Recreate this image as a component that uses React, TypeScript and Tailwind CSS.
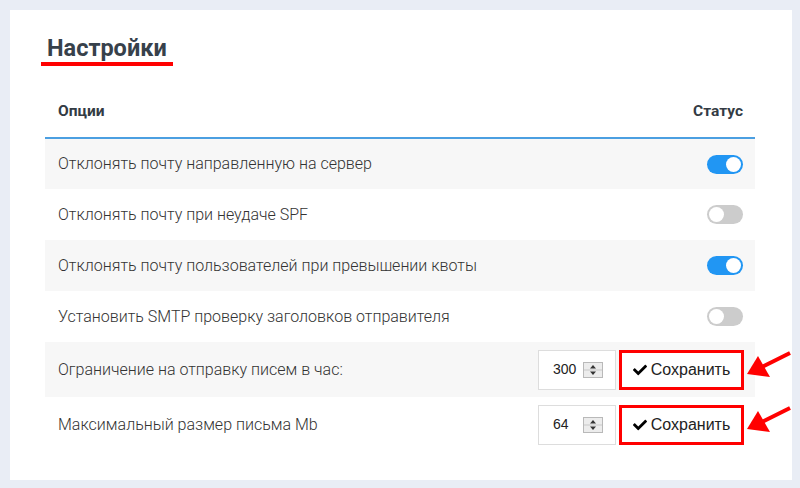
import React, { useState } from 'react';
import { FaCheck } from 'react-icons/fa';

type Row = {
  label: string;
  kind: 'toggle' | 'number';
  on?: boolean;
  value?: number;
};

const rows: Row[] = [
  { label: 'Отклонять почту направленную на сервер', kind: 'toggle', on: true },
  { label: 'Отклонять почту при неудаче SPF', kind: 'toggle', on: false },
  { label: 'Отклонять почту пользователей при превышении квоты', kind: 'toggle', on: true },
  { label: 'Установить SMTP проверку заголовков отправителя', kind: 'toggle', on: false },
  { label: 'Ограничение на отправку писем в час:', kind: 'number', value: 300 },
  { label: 'Максимальный размер письма Mb', kind: 'number', value: 64 },
];

const Toggle: React.FC<{ on: boolean }> = ({ on }) => (
  <div
    className={
      on
        ? 'w-[36px] h-[19px] rounded-full bg-[#2196f3] flex items-center justify-end px-[2px]'
        : 'w-[36px] h-[19px] rounded-full bg-[#cccccc] flex items-center justify-start px-[2px]'
    }
  >
    <div className="w-[15px] h-[15px] rounded-full bg-white" />
  </div>
);

const Spinner = () => (
  <svg width="20" height="16" viewBox="0 0 20 16">
    <rect x="0.5" y="0.5" width="19" height="15" fill="#ececec" stroke="#b9b9b9" />
    <line x1="1" y1="8" x2="19" y2="8" stroke="#c8c8c8" />
    <path d="M10 3 L13 6.5 L7 6.5 Z" fill="#333" />
    <path d="M10 13 L13 9.5 L7 9.5 Z" fill="#333" />
  </svg>
);

const NumberSave: React.FC<{ value: number }> = ({ value }) => (
  <div className="flex items-center gap-[3px]">
    <div className="w-[78px] h-[40px] border border-[#dddddd] bg-white flex items-center pl-[14px] pr-[12px] justify-between">
      <span className="text-[14px] text-[#222] font-['Liberation_Sans',Arial,sans-serif]">{value}</span>
      <Spinner />
    </div>
    <button className="w-[125px] h-[40px] border-[3px] border-[#ff0000] bg-white flex items-center justify-center gap-[4px] text-[16px] text-[#222] font-['Liberation_Sans',Arial,sans-serif]">
      <FaCheck className="w-[14px] h-[14px] text-black" />
      <span>Сохранить</span>
    </button>
  </div>
);

export default function App() {
  const [items] = useState(rows);

  return (
    <div className="relative w-[800px] h-[488px] bg-[#e9edf5] pl-[10px] pt-[10px] pr-[8px] pb-[8px] font-['Roboto',sans-serif]">
      <div className="h-full bg-white pt-[24px] pl-[35px] pr-[37px]">
        <div className="inline-block -ml-[4px] px-[6px] border-b-4 border-[#ff0000]">
          <h1 className="text-[23.5px] leading-[28px] font-bold text-[#37414b]">Настройки</h1>
        </div>

        <div className="mt-[35px]">
          <div className="h-[38px] flex justify-between px-[13px] pr-[12px] border-b-2 border-[#4b9fe1] text-[15.5px] leading-[20px] font-bold text-[#333b44]">
            <span>Опции</span>
            <span>Статус</span>
          </div>

          {items.map((r, i) => (
            <div
              key={i}
              className={
                (r.kind === 'number' ? 'h-[55px] ' : i === 0 ? 'h-[50px] ' : 'h-[51px] ') +
                (i % 2 === 0 ? 'bg-[#f7f7f7] ' : 'bg-white ') +
                'flex items-center justify-between pl-[13px] pr-[11px]'
              }
            >
              <span className="text-[16px] font-light text-[#333333]">{r.label}</span>
              {r.kind === 'toggle' ? (
                <div className="pr-[1px]">
                  <Toggle on={!!r.on} />
                </div>
              ) : (
                <NumberSave value={r.value ?? 0} />
              )}
            </div>
          ))}
        </div>
      </div>

      {/* red annotation arrows */}
      <svg className="absolute left-0 top-0 pointer-events-none" width="800" height="488" viewBox="0 0 800 488">
        <line x1="762" y1="367" x2="790" y2="353" stroke="#ff0000" strokeWidth="4" />
        <path d="M747 374 L758 356 L770 377 Z" fill="#ff0000" />
        <line x1="762" y1="422" x2="790" y2="408" stroke="#ff0000" strokeWidth="4" />
        <path d="M747 429 L758 411 L770 432 Z" fill="#ff0000" />
      </svg>
    </div>
  );
}
